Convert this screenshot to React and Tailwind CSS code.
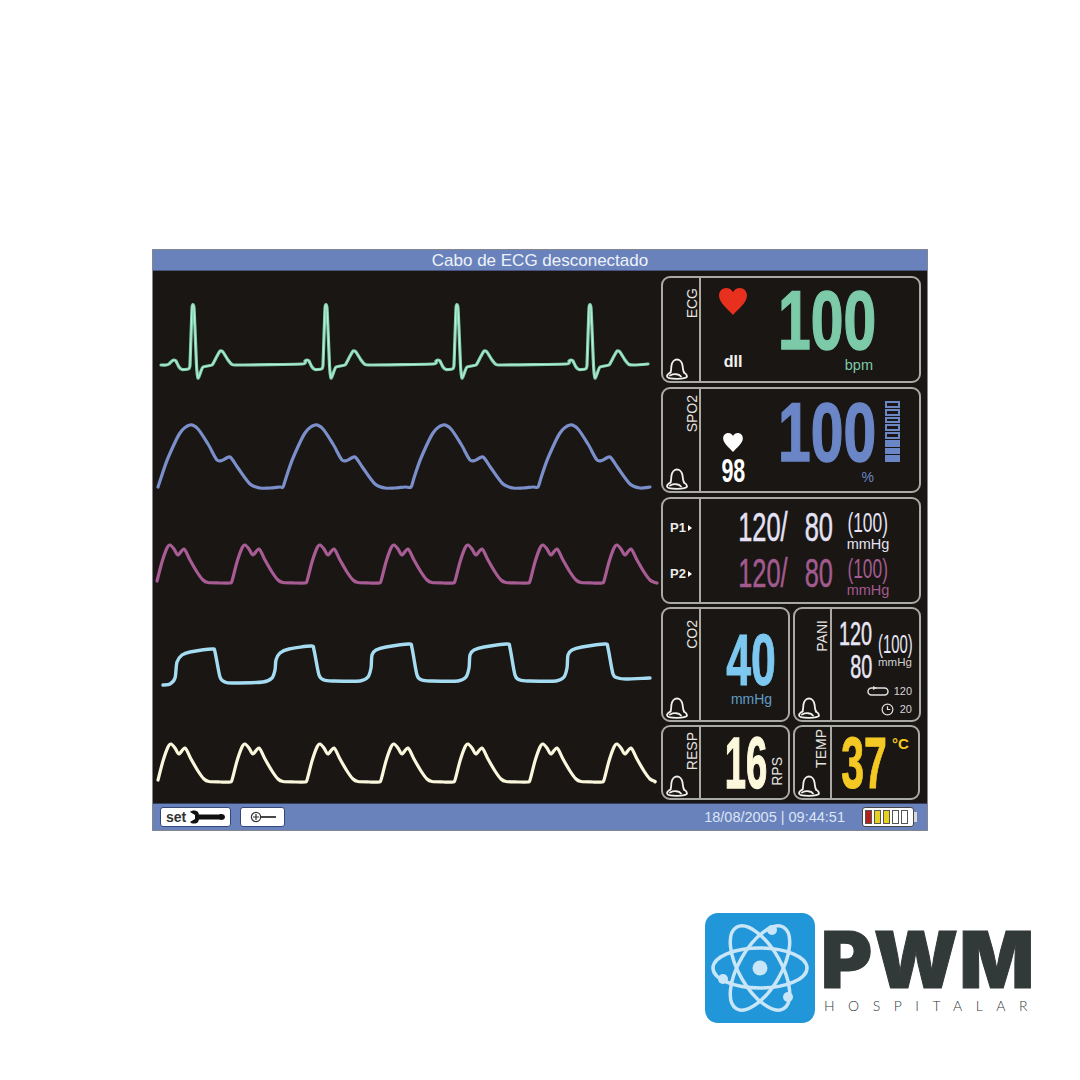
const curve = (pts, k = 0.14) => {
  let d = `M${pts[0][0]} ${pts[0][1]}`;
  for (let i = 0; i < pts.length - 1; i++) {
    const p0 = pts[i - 1] || pts[i];
    const p1 = pts[i];
    const p2 = pts[i + 1];
    const p3 = pts[i + 2] || p2;
    const c1x = p1[0] + (p2[0] - p0[0]) * k;
    const c1y = p1[1] + (p2[1] - p0[1]) * k;
    const c2x = p2[0] - (p3[0] - p1[0]) * k;
    const c2y = p2[1] - (p3[1] - p1[1]) * k;
    d += ` C${c1x.toFixed(1)} ${c1y.toFixed(1)} ${c2x.toFixed(1)} ${c2y.toFixed(1)} ${p2[0]} ${p2[1]}`;
  }
  return d;
};

const ecgPts = () => {
  const pts = [[161, 365], [166, 365]];
  [193, 326, 457, 590].forEach((s) => {
    pts.push(
      [s - 24, 364], [s - 21, 361], [s - 19, 360], [s - 17, 361], [s - 14, 367], [s - 11, 369.5],
      [s - 5, 369], [s - 3, 365], [s - 1, 308], [s + 1, 308], [s + 3.5, 365], [s + 5, 378], [s + 7, 374],
      [s + 10, 367], [s + 19, 365], [s + 23, 358], [s + 27, 351], [s + 30, 352], [s + 35, 360], [s + 39, 364.5], [s + 44, 365]
    );
  });
  pts.push([648, 364]);
  return pts;
};
const ecgD = curve(ecgPts(), 0.08);

const spoPts = () => {
  const pts = [];
  [190, 315, 443, 570].forEach((p, i) => {
    pts.push([p - 32, 487], [p - 29, 478], [p - 22, 458], [p - 10, 433], [p, 425], [p + 8, 429], [p + 18, 444], [p + 27, 460], [p + 33, 460], [p + 40, 457], [p + 48, 468], [p + 60, 484], [p + 70, 488]);
    if (i < 3) pts.push([p + 80, 488], [p + 90, 487]);
  });
  pts.push([650, 487]);
  return pts;
};

const arterial = (off, peaks, end) => {
  const pts = [];
  peaks.forEach((p) => {
    pts.push([p - 15, 583 + off], [p - 13, 581 + off], [p - 8, 562 + off], [p - 3, 548 + off], [p, 545 + off], [p + 4, 549 + off], [p + 8, 555 + off], [p + 14, 549 + off], [p + 20, 560 + off], [p + 27, 572 + off], [p + 33, 580 + off], [p + 38, 582.5 + off], [p + 50, 583 + off]);
  });
  pts.pop();
  pts.push(end);
  return pts.slice(1);
};
const co2 = [[163, 685], [170, 684], [175, 678], [177, 662], [182, 655], [190, 652], [212, 649], [215, 652], [220, 677], [225, 682], [232, 683], [263, 682], [272, 678], [275, 670], [276, 660], [280, 653], [289, 649], [311, 646], [314, 650], [319, 675], [324, 680], [332, 681], [360, 681], [368, 677], [371, 668], [372, 655], [376, 650], [386, 647], [409, 644], [412, 648], [417, 675], [422, 680], [430, 681], [458, 681], [466, 677], [469, 668], [470, 655], [474, 650], [484, 647], [507, 644], [510, 648], [515, 675], [520, 680], [528, 681], [556, 681], [564, 677], [567, 668], [568, 655], [572, 650], [582, 647], [605, 644], [608, 648], [613, 674], [618, 678], [626, 679], [650, 678]];

const Bell = ({ className }) => (
  <svg viewBox="0 0 22 22" className={className} fill="none" stroke="#f0f0ec" strokeWidth="1.8" strokeLinejoin="round" strokeLinecap="round">
    <path d="M4.5 14.5 C5.5 12 5 10 5.5 7.5 C6 3.8 8.5 1.5 11 1.5 C13.5 1.5 16 3.8 16.5 7.5 C17 10 16.8 12 18 14.5" />
    <path d="M4.5 14.5 C2.5 15.5 1 17 1 18.2 C1 19.8 5 20.8 11 20.8 C17 20.8 21 19.8 21 18.2 C21 17 19.5 15.5 18 14.5" />
    <path d="M4 17.5 C8 15.5 13 15.8 15 18.5" />
  </svg>
);

const Heart = ({ className, fill }) => (
  <svg viewBox="0 0 28 27" className={className}>
    <path fill={fill} d="M14 27 C9 21 0 15 0 7.5 C0 3 3.4 0 7.2 0 C10 0 12.8 1.6 14 4.2 C15.2 1.6 18 0 20.8 0 C24.6 0 28 3 28 7.5 C28 15 19 21 14 27 Z" />
  </svg>
);

const Label = ({ children, className }) => (
  <span className={`[writing-mode:vertical-rl] rotate-180 text-[14px] leading-[14px] text-[#e4e4e0] whitespace-nowrap ${className}`}>{children}</span>
);

const Card = ({ className, children }) => (
  <div className={`flex border-2 border-[#a9a9a5] rounded-[9px] ${className}`}>{children}</div>
);

const Side = ({ label, width = "w-[38px]", labelClass = "mt-[8px]" }) => (
  <div className={`${width} shrink-0 border-r-2 border-[#a9a9a5] flex flex-col justify-between items-end`}>
    <Label className={labelClass}>{label}</Label>
    <Bell className="w-[22px] h-[22px] self-start ml-[3px] mb-[1px]" />
  </div>
);

const Num = ({ children, box, text }) => (
  <div className={`flex items-center justify-center shrink-0 ${box}`}>
    <span className={`inline-block shrink-0 whitespace-nowrap font-['Liberation_Sans',sans-serif] ${text}`}>{children}</span>
  </div>
);

const BIG = "font-bold text-[84px] leading-none scale-x-[.7] [-webkit-text-stroke:1.5px_currentColor]";
const THIN = "[-webkit-text-stroke:0.5px_currentColor]";

const Pressure = ({ color, mt }) => (
  <div className={`flex items-start ${mt}`}>
    <Num box="w-[50px] h-[34px] ml-[37px]" text={`text-[41px] leading-none scale-x-[.62] ${THIN} ${color}`}>120/</Num>
    <Num box="w-[30px] h-[34px] ml-[16px]" text={`text-[41px] leading-none scale-x-[.62] ${THIN} ${color}`}>80</Num>
    <div className="flex flex-col items-center ml-[12px] w-[44px]">
      <Num box="w-[44px] h-[26px]" text={`text-[28px] leading-none scale-x-[.62] ${color}`}>(100)</Num>
      <span className={`text-[14.5px] leading-[14px] mt-[1px] ${color}`}>mmHg</span>
    </div>
  </div>
);

const Tri = () => <span className="ml-[2px] w-0 h-0 border-y-[3px] border-y-transparent border-l-[4px] border-l-white" />;

export default function App() {
  return (
    <div className="w-[1080px] h-[1080px] bg-white pt-[249px] pl-[152px] font-['Liberation_Sans',sans-serif]">
      <div className="w-[776px] h-[582px] border border-[#85858f] flex flex-col">
        <div className="h-[21px] bg-[#6a82bc] border-b border-[#4a5680] flex items-center justify-center text-[17px] leading-none text-[#eef2f8]">
          Cabo de ECG desconectado
        </div>
        <div className="h-[532px] bg-[#1a1614] flex">
          <svg viewBox="153 271 508 532" className="w-[508px] h-[532px] shrink-0" fill="none" strokeLinejoin="round" strokeLinecap="round">
            <path d={ecgD} stroke="#7fd0ad" strokeWidth="3.2" />
            <path d={ecgD} stroke="#c4f2de" strokeWidth="1" />
            <path d={curve(spoPts())} stroke="#7b8fca" strokeWidth="3.2" />
            <path d={curve(arterial(0, [170, 245, 320, 394, 468, 543, 617], [657, 583]))} stroke="#a85c94" strokeWidth="3.2" />
            <path d={curve(co2)} stroke="#a5dcf2" strokeWidth="3.4" />
            <path d={curve(arterial(199, [171, 245, 320, 394, 468, 543, 617], [655, 782]))} stroke="#fbf7dd" strokeWidth="3.2" />
          </svg>
          <div className="w-[260px] shrink-0 pt-[5px] flex flex-col">
            <Card className="h-[107px]">
              <Side label="ECG" labelClass="mt-[10px]" />
              <div className="flex-1 flex">
                <div className="w-[64px] flex flex-col items-center pt-[10px] shrink-0">
                  <Heart className="w-[28px] h-[27px]" fill="#e8301f" />
                  <span className="mt-[38px] text-[16px] leading-[18px] font-bold text-[#f0f0ec]">dII</span>
                </div>
                <div className="flex flex-col items-end ml-[12px] w-[100px] pt-[10px]">
                  <Num box="w-[100px] h-[64px]" text={`${BIG} text-[#7ccaa7]`}>100</Num>
                  <span className="mt-[6px] mr-[4px] text-[14.5px] leading-[15px] text-[#7ccaa7]">bpm</span>
                </div>
              </div>
            </Card>
            <Card className="h-[106px] mt-[4px]">
              <Side label="SPO2" labelClass="mt-[6px]" />
              <div className="flex-1 flex">
                <div className="w-[64px] flex flex-col items-center pt-[44px] shrink-0">
                  <Heart className="w-[20px] h-[19px]" fill="#ffffff" />
                  <Num box="w-[24px] h-[26px] mt-[5px]" text="font-bold text-[33px] leading-none scale-x-[.65] text-white">98</Num>
                </div>
                <div className="flex flex-col items-end ml-[12px] w-[100px] pt-[11px] shrink-0">
                  <Num box="w-[100px] h-[64px]" text={`${BIG} text-[#6b86c6]`}>100</Num>
                  <span className="mt-[5px] mr-[3px] text-[14px] leading-[16px] text-[#6b86c6]">%</span>
                </div>
                <div className="w-[15px] ml-[8px] mt-[12px] h-[61px] flex flex-col gap-[1px]">
                  {[0, 1, 2, 3, 4].map((i) => (
                    <div key={i} className="h-[7px] border-[2px] border-[#6b86c6]" />
                  ))}
                  <div className="h-[7px] bg-[#6b86c6]" />
                  <div className="h-[7px] bg-[#6b86c6]" />
                  <div className="h-[7px] bg-[#6b86c6]" />
                </div>
              </div>
            </Card>
            <Card className="h-[107px] mt-[4px]">
              <div className="w-[38px] shrink-0 border-r-2 border-[#a9a9a5] flex flex-col items-center pt-[21px] gap-[30px]">
                <div className="flex items-center text-[13px] leading-[16px] font-bold text-[#ecece8]">P1<Tri /></div>
                <div className="flex items-center text-[13px] leading-[16px] font-bold text-[#ecece8]">P2<Tri /></div>
              </div>
              <div className="flex-1 flex flex-col pt-[11px]">
                <Pressure color="text-[#e4e2f4]" mt="" />
                <Pressure color="text-[#a25b8f]" mt="mt-[5px]" />
              </div>
            </Card>
            <div className="h-[115px] mt-[3px] flex gap-[3px]">
              <Card className="w-[129px]">
                <Side label="CO2" labelClass="mt-[11px]" />
                <div className="flex-1 flex flex-col items-center pt-[23px] pl-[14px]">
                  <Num box="w-[50px] h-[56px]" text="font-bold text-[72px] leading-none scale-x-[.62] [-webkit-text-stroke:1px_currentColor] text-[#7cc8f0]">40</Num>
                  <span className="mt-[4px] text-[14px] leading-[15px] text-[#5f9dc8]">mmHg</span>
                </div>
              </Card>
              <Card className="w-[128px]">
                <Side label="PANI" width="w-[37px]" labelClass="mt-[11px] mr-[1px]" />
                <div className="flex-1 flex flex-col pt-[11px] pl-[7px]">
                  <div className="flex items-end">
                    <Num box="w-[33px] h-[26px]" text={`text-[33px] leading-none scale-x-[.6] ${THIN} text-[#e8e6f4]`}>120</Num>
                    <Num box="w-[35px] h-[20px] ml-[6px] -mb-[8px]" text="text-[26px] leading-none scale-x-[.57] text-[#e8e6f4]">(100)</Num>
                  </div>
                  <div className="flex mt-[8px]">
                    <Num box="w-[22px] h-[25px] ml-[11px]" text={`text-[33px] leading-none scale-x-[.6] ${THIN} text-[#e8e6f4]`}>80</Num>
                    <span className="ml-[6px] mt-[2px] text-[11.5px] leading-[12px] text-[#cfcfcf]">mmHg</span>
                  </div>
                  <div className="flex items-center justify-end mt-[5px] pr-[7px] text-[11px] leading-[14px] text-[#d4d4d4]">
                    <svg viewBox="0 0 22 10" className="w-[22px] h-[10px] mr-[5px]" fill="none" stroke="#e0e0e0" strokeWidth="1.5">
                      <rect x="1" y="2" width="20" height="7" rx="3.5" />
                      <path d="M6 0 L10 2 L6 4" fill="#e0e0e0" stroke="none" />
                    </svg>
                    120
                  </div>
                  <div className="flex items-center justify-end mt-[4px] pr-[7px] text-[11px] leading-[14px] text-[#d4d4d4]">
                    <svg viewBox="0 0 14 14" className="w-[13px] h-[13px] mr-[6px]" fill="none" stroke="#e0e0e0" strokeWidth="1.3">
                      <circle cx="7" cy="7" r="5.8" />
                      <path d="M7 3.5 V7 H10" />
                    </svg>
                    20
                  </div>
                </div>
              </Card>
            </div>
            <div className="h-[75px] mt-[3px] flex gap-[3px]">
              <Card className="w-[129px]">
                <Side label="RESP" labelClass="mt-[5px]" />
                <div className="flex-1 flex items-start pt-[9px] pl-[24px]">
                  <Num box="w-[42px] h-[53px]" text="font-bold text-[72px] leading-none scale-x-[.53] [-webkit-text-stroke:1.5px_currentColor] text-[#fbf8dc]">16</Num>
                  <Label className="ml-[3px] mt-[21px]">RPS</Label>
                </div>
              </Card>
              <Card className="w-[127px]">
                <Side label="TEMP" width="w-[37px]" labelClass="mt-[2px] mr-[2px]" />
                <div className="flex-1 flex items-start pt-[9px] pl-[9px]">
                  <Num box="w-[46px] h-[53px]" text="font-bold text-[72px] leading-none scale-x-[.57] [-webkit-text-stroke:1px_currentColor] text-[#f4c924]">37</Num>
                  <span className="ml-[5px] text-[15px] leading-[16px] font-bold text-[#f4c924]">°C</span>
                </div>
              </Card>
            </div>
          </div>
        </div>
        <div className="h-[27px] bg-[#6a82bc] border-t border-[#33405f] flex items-center pl-[7px] pr-[10px]">
          <div className="w-[71px] h-[20px] bg-white rounded-[3px] border border-[#34477a] flex items-center pl-[5px] text-[14px] font-bold text-[#333]">
            set
            <svg viewBox="0 0 36 14" className="w-[36px] h-[14px] ml-[3px]">
              <path fill="#111" d="M1 2 C3 0 7 0 9 2 L10 4.5 H30 C33 3.5 36 4.5 36 7 C36 9.5 33 10.5 30 9.5 H10 L9 12 C7 14 3 14 1 12 L6 9 V5 Z" />
            </svg>
          </div>
          <div className="w-[45px] h-[20px] ml-[9px] bg-white rounded-[3px] border border-[#34477a] flex items-center justify-center">
            <svg viewBox="0 0 30 12" className="w-[30px] h-[12px]" fill="none" stroke="#333" strokeWidth="1.2">
              <circle cx="8" cy="6" r="4.6" />
              <path d="M5 6 H11 M8 3 V9" />
              <path d="M12.6 6 H28" strokeWidth="1.8" />
            </svg>
          </div>
          <span className="ml-auto text-[14.5px] leading-none text-[#dbe5f5]">18/08/2005 | 09:44:51</span>
          <div className="ml-[17px] flex items-center">
            <div className="w-[52px] h-[20px] bg-white rounded-[3px] border border-[#444] flex items-center gap-[2px] px-[2px]">
              <div className="w-[7px] h-[14px] bg-[#b3201c] border border-[#555]" />
              <div className="w-[7px] h-[14px] bg-[#e6d21e] border border-[#555]" />
              <div className="w-[7px] h-[14px] bg-[#e6d21e] border border-[#555]" />
              <div className="w-[7px] h-[14px] bg-white border border-[#555]" />
              <div className="w-[7px] h-[14px] bg-white border border-[#555]" />
            </div>
            <div className="w-[3px] h-[10px] bg-[#d8d8d8]" />
          </div>
        </div>
      </div>
      <div className="mt-[82px] ml-[553px] flex">
        <div className="w-[110px] h-[110px] rounded-[13px] bg-[#2196d8] shrink-0">
          <svg viewBox="0 0 110 110" className="w-[110px] h-[110px]" fill="none" stroke="#c9e6f8" strokeWidth="3.5">
            <ellipse cx="55" cy="55" rx="47" ry="20" />
            <ellipse cx="55" cy="55" rx="47" ry="21" transform="rotate(60 55 55)" />
            <ellipse cx="55" cy="55" rx="47" ry="21" transform="rotate(120 55 55)" />
            <g fill="#c9e6f8" stroke="none">
              <circle cx="55" cy="55" r="7.5" />
              <circle cx="67" cy="17" r="5" />
              <circle cx="18" cy="66" r="5" />
              <circle cx="83" cy="84" r="5" />
            </g>
          </svg>
        </div>
        <div className="ml-[9px] flex flex-col pt-[16px]">
          <span className="-ml-[3px] font-['Inter',sans-serif] font-black text-[78px] leading-[62px] tracking-[1.5px] [-webkit-text-stroke:1px_currentColor] text-[#323a39] whitespace-nowrap">PWM</span>
          <span className="mt-[6px] font-['Lato',sans-serif] font-light text-[14px] leading-[18px] tracking-[13.5px] text-[#323a39] whitespace-nowrap">HOSPITALAR</span>
        </div>
      </div>
    </div>
  );
}
